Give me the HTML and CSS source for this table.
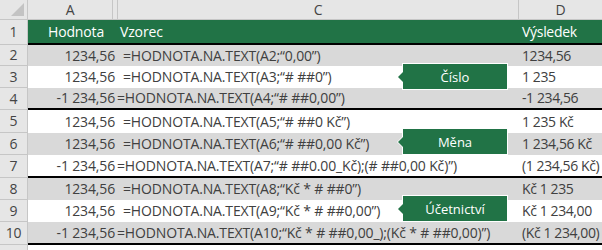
FILE: index.html
```html
<!DOCTYPE html>
<html lang="cs">
<head>
<meta charset="utf-8">
<link rel="stylesheet" href="styles.css">
</head>
<body>
<div class="sheet">
  <div class="colhead">
    <div class="corner"><span class="tri"></span></div>
    <div class="ch ch-a">A</div>
    <div class="ch ch-b"></div>
    <div class="ch ch-c">C</div>
    <div class="ch ch-d">D</div>
  </div>

  <div class="row title end">
    <div class="rn">1</div>
    <div class="val">Hodnota</div>
    <div class="fx">Vzorec</div>
    <div class="res">Výsledek</div>
  </div>

  <div class="row gray r-short">
    <div class="rn">2</div>
    <div class="val">1234,56</div>
    <div class="fx">=HODNOTA.NA.TEXT(A2;“0,00”)</div>
    <div class="res">1234,56</div>
  </div>
  <div class="row">
    <div class="rn">3</div>
    <div class="val">1234,56</div>
    <div class="fx">=HODNOTA.NA.TEXT(A3;“# ##0”)</div>
    <div class="res">1 235</div>
  </div>
  <div class="row gray end">
    <div class="rn">4</div>
    <div class="val neg">-1 234,56</div>
    <div class="fx">=HODNOTA.NA.TEXT(A4;“# ##0,00”)</div>
    <div class="res">-1 234,56</div>
  </div>

  <div class="row r-tall">
    <div class="rn">5</div>
    <div class="val">1234,56</div>
    <div class="fx">=HODNOTA.NA.TEXT(A5;“# ##0 Kč”)</div>
    <div class="res">1 235 Kč</div>
  </div>
  <div class="row gray">
    <div class="rn">6</div>
    <div class="val">1234,56</div>
    <div class="fx">=HODNOTA.NA.TEXT(A6;“# ##0,00 Kč”)</div>
    <div class="res">1 234,56 Kč</div>
  </div>
  <div class="row end r-tall">
    <div class="rn">7</div>
    <div class="val neg">-1 234,56</div>
    <div class="fx">=HODNOTA.NA.TEXT(A7;“# ##0.00_Kč);(# ##0,00 Kč)”)</div>
    <div class="res">(1 234,56 Kč)</div>
  </div>

  <div class="row gray">
    <div class="rn">8</div>
    <div class="val">1234,56</div>
    <div class="fx">=HODNOTA.NA.TEXT(A8;“Kč * # ##0”)</div>
    <div class="res">Kč 1 235</div>
  </div>
  <div class="row">
    <div class="rn">9</div>
    <div class="val">1234,56</div>
    <div class="fx">=HODNOTA.NA.TEXT(A9;“Kč * # ##0,00”)</div>
    <div class="res">Kč 1 234,00</div>
  </div>
  <div class="row gray end r-tall">
    <div class="rn">10</div>
    <div class="val neg">-1 234,56</div>
    <div class="fx">=HODNOTA.NA.TEXT(A10;“Kč * # ##0,00_);(Kč * # ##0,00)”)</div>
    <div class="res">(Kč 1 234,00)</div>
  </div>
  <div class="row">
    <div class="rn"></div>
    <div class="val"></div>
    <div class="fx"></div>
    <div class="res"></div>
  </div>

  <div class="callout c1">Číslo</div>
  <div class="callout c2">Měna</div>
  <div class="callout c3">Účetnictví</div>
</div>
</body>
</html>
```

FILE: styles.css
```css
* { box-sizing: border-box; }
html, body { margin: 0; padding: 0; background: #fff; }
body {
  font-family: "Open Sans", "Noto Sans", sans-serif;
  font-size: 14px;
  letter-spacing: -0.15px;
  color: #404040;
  width: 602px;
  height: 250px;
  overflow: hidden;
}
.sheet { position: relative; width: 602px; }

.colhead {
  display: grid;
  grid-template-columns: 28px 85px 5px 401px 83px;
  height: 20px;
  background: #e6e6e6;
  border-bottom: 1px solid #c6c6c6;
}
.corner {
  position: relative;
  border-right: 1px solid #c6c6c6;
}
.tri {
  position: absolute;
  right: 3px;
  bottom: 3px;
  width: 0;
  height: 0;
  border-left: 13px solid transparent;
  border-bottom: 13px solid #c3c3c3;
}
.ch {
  display: flex;
  align-items: center;
  justify-content: center;
  border-right: 1px solid #c6c6c6;
  color: #444;
  font-size: 14px;
  line-height: 1;
}
.ch-d { border-right: 0; }

.row {
  display: grid;
  grid-template-columns: 28px 89px 402px 83px;
  height: 22px;
  align-items: center;
  line-height: 1;
  white-space: nowrap;
}
.row.r-short { height: 21px; }
.row.r-tall { height: 23px; }
.row.gray { background: #d9d9d9; }
.row.end { border-bottom: 2px solid #000; }
.row.title { height: 25px; background: #217346; color: #fff; }

.rn {
  height: 100%;
  display: flex;
  align-items: center;
  justify-content: center;
  background: #e6e6e6;
  border-right: 1px solid #c6c6c6;
  border-bottom: 1px solid #c6c6c6;
  color: #444;
}
.row.end .rn { margin-bottom: -2px; height: calc(100% + 2px); }

.val { text-align: right; padding-right: 2px; }
.title .val { text-align: left; padding-left: 20px; }
.fx { padding-left: 6px; }
.val.neg + .fx { padding-left: 0; }
.title .fx { padding-left: 3px; }
.res { padding-left: 3px; letter-spacing: -0.4px; }
.title .res { letter-spacing: -0.3px; }

.callout {
  position: absolute;
  left: 402px;
  width: 106px;
  height: 27px;
  background: #217346;
  border: 1px solid #fff;
  color: #fff;
  display: flex;
  align-items: center;
  justify-content: center;
  font-size: 13px;
  letter-spacing: 0;
}
.callout::before {
  content: "";
  position: absolute;
  left: -6px;
  top: 50%;
  margin-top: -6px;
  width: 0;
  height: 0;
  border-top: 6px solid transparent;
  border-bottom: 6px solid transparent;
  border-right: 6px solid #fff;
}
.callout::after {
  content: "";
  position: absolute;
  left: -5px;
  top: 50%;
  margin-top: -5px;
  width: 0;
  height: 0;
  border-top: 5px solid transparent;
  border-bottom: 5px solid transparent;
  border-right: 5px solid #217346;
}
.c1 { top: 63px; }
.c2 { top: 128px; }
.c3 { top: 195px; }
```
